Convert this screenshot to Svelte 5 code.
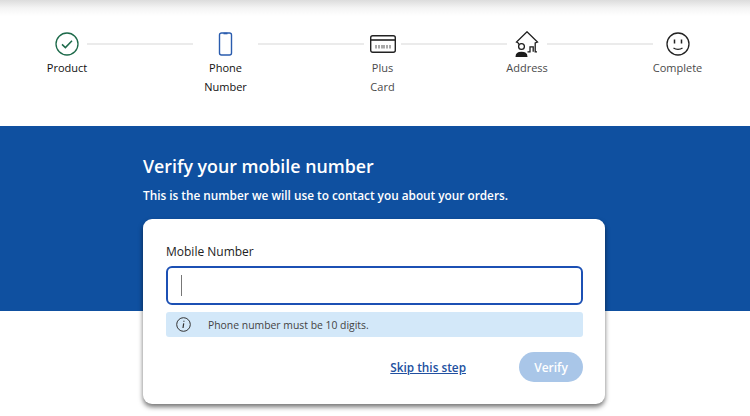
<script lang="ts">
  const steps = [
    { id: "product", lines: ["Product"], width: 40, active: true },
    { id: "phone", lines: ["Phone", "Number"], width: 65, active: true },
    { id: "card", lines: ["Plus", "Card"], width: 37, active: false },
    { id: "address", lines: ["Address"], width: 40, active: false },
    { id: "complete", lines: ["Complete"], width: 49, active: false },
  ];
</script>

{#snippet icon(id: string)}
  {#if id === "product"}
    <svg width="24" height="24" viewBox="0 0 24 24" fill="none" stroke="#1d6a4a">
      <circle cx="12" cy="12" r="11" stroke-width="1.3" />
      <path d="M7 12.4l3.4 3.2L17 8.8" stroke-width="1.5" />
    </svg>
  {:else if id === "phone"}
    <svg width="24" height="24" viewBox="0 0 24 24" fill="none" stroke="#2a5cae">
      <rect x="5.500" y="1" width="12" height="22" rx="2" stroke-width="1.4" />
      <path d="M9.500 1.500h4" stroke-width="1.6" />
    </svg>
  {:else if id === "card"}
    <svg width="26" height="24" viewBox="0 0 26 24" fill="none" stroke="#222">
      <rect x="0.7" y="3.7" width="24.6" height="16.6" rx="2" stroke-width="1.4" />
      <path d="M1 8h24" stroke-width="1.6" />
      <path d="M6 13v3.500M9 13v3.500M12 13v3.500M14 13v3.500M17 13v3.500M20 13v3.500" stroke-width="1" stroke="#555" />
    </svg>
  {:else if id === "address"}
    <svg width="26" height="26" viewBox="0 0 26 26" fill="none" stroke="#1c1c1c" stroke-width="1.3">
      <path d="M4.500 12L2.500 11 13 .8 23.500 11l-2.300 1v8.800h1.800" />
      <path d="M4.500 12v1.500" />
      <circle cx="7.500" cy="15.500" r="2.900" />
      <path d="M2.200 25.500c0-3 2-4.200 5.300-4.200s5.300 1.200 5.300 4.200z" fill="#1c1c1c" />
      <path d="M13.500 20.800h2.500v-5h3.200v5" />
    </svg>
  {:else}
    <svg width="24" height="24" viewBox="0 0 24 24" fill="none" stroke="#222" stroke-width="1.3">
      <circle cx="12" cy="12" r="11" />
      <path d="M8.500 7.500v4M15.500 7.500v4" stroke-width="1.500" />
      <path d="M7.500 16c2.500 1.800 6.500 1.800 9 0" />
    </svg>
  {/if}
{/snippet}

<div class="page">
  <div class="top-shade"></div>

  <nav class="stepper" aria-label="Progress">
    {#each steps as step, i}
      {#if i > 0}
        <span class="connector"></span>
      {/if}
      <div class="step" class:active={step.active} style="width: {step.width}px">
        <div class="step-icon">{@render icon(step.id)}</div>
        <div class="step-label">
          {#each step.lines as line}
            <span>{line}</span>
          {/each}
        </div>
      </div>
    {/each}
  </nav>

  <section class="band">
    <h1>Verify your mobile number</h1>
    <p>This is the number we will use to contact you about your orders.</p>

    <form class="card">
      <label for="mobile">Mobile Number</label>
      <div class="field">
        <input id="mobile" type="tel" aria-label="Mobile Number" />
        <span class="caret"></span>
      </div>
      <div class="hint">
        <svg width="15" height="15" viewBox="0 0 15 15" fill="none" stroke="#333">
          <circle cx="7.500" cy="7.500" r="6.800" stroke-width="1" />
          <path d="M7.900 3.800v.9M7.700 6.400L7 11" stroke-width="1.200" />
        </svg>
        <span>Phone number must be 10 digits.</span>
      </div>
      <div class="actions">
        <a href="#skip">Skip this step</a>
        <button type="button">Verify</button>
      </div>
    </form>
  </section>
</div>

<style>
  :global(body) {
    background: #fff;
    overflow: hidden;
  }

  .page {
    position: relative;
    width: 750px;
    height: 416px;
    overflow: hidden;
    font-family: "Open Sans", "Noto Sans", sans-serif;
    color: #333;
  }

  .top-shade {
    position: absolute;
    inset: 0 0 auto 0;
    height: 16px;
    background: linear-gradient(#dcdcdc, #f4f4f4 50%, #fff);
  }

  .stepper {
    display: flex;
    align-items: flex-start;
    height: 126px;
    box-sizing: border-box;
    padding: 31px 0 0 47px;
  }

  .connector {
    flex: none;
    width: 106px;
    height: 2px;
    margin-top: 12px;
    background: #ebebeb;
  }

  .step {
    flex: none;
    display: flex;
    flex-direction: column;
    align-items: center;
  }

  .step-icon {
    display: flex;
    align-items: center;
    justify-content: center;
    height: 26px;
    margin-bottom: 1px;
  }

  .step-label {
    display: flex;
    flex-direction: column;
    align-items: center;
    font-size: 11px;
    line-height: 19px;
    white-space: nowrap;
    color: #4a4a4a;
  }

  .step.active .step-label {
    color: #111;
    font-weight: 500;
  }

  .band {
    height: 185px;
    box-sizing: border-box;
    padding: 28px 145px 0 143px;
    background: #0f50a0;
    color: #fff;
  }

  h1 {
    margin: 0;
    font-size: 17.800px;
    line-height: 25px;
    font-weight: 600;
  }

  .band > p {
    margin: 7px 0 0;
    font-size: 11.800px;
    line-height: 18px;
    font-weight: 600;
  }

  .card {
    display: flex;
    flex-direction: column;
    box-sizing: border-box;
    width: 462px;
    height: 185px;
    margin-top: 15px;
    padding: 24px 22px 0 23px;
    border-radius: 9px;
    background: #fff;
    box-shadow: 0 3px 5px rgba(0, 0, 0, 0.55);
    color: #333;
  }

  label {
    font-size: 12px;
    line-height: 18px;
    color: #222;
  }

  .field {
    position: relative;
    margin-top: 5px;
  }

  input {
    display: block;
    width: 100%;
    height: 39px;
    box-sizing: border-box;
    border: 2px solid #1c50b4;
    border-radius: 6px;
    outline: 0;
    background: #fff;
  }

  .caret {
    position: absolute;
    left: 15px;
    top: 9px;
    width: 1px;
    height: 21px;
    background: #777;
  }

  .hint {
    display: flex;
    align-items: center;
    gap: 17px;
    height: 25px;
    margin-top: 7px;
    padding-left: 10px;
    border-radius: 3px;
    background: #d3e8f9;
    font-size: 10.400px;
    color: #444;
  }

  .actions {
    display: flex;
    align-items: center;
    justify-content: flex-end;
    gap: 53px;
    margin-top: 15px;
  }

  a {
    color: #2250a0;
    font-size: 11.800px;
    font-weight: 600;
  }

  button {
    width: 64px;
    height: 30px;
    border: 0;
    border-radius: 15px;
    background: #a9c6e8;
    color: #fff;
    font: 600 12px "Open Sans", "Noto Sans", sans-serif;
  }
</style>
